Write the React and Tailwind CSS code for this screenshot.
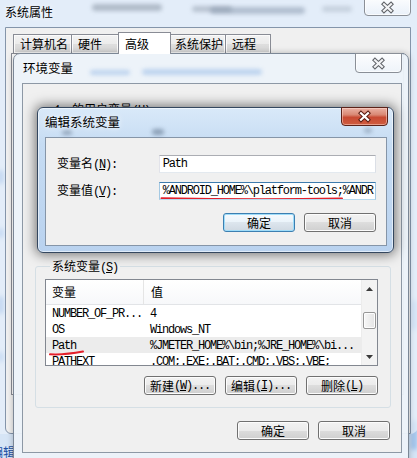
import React from 'react'

const MONO = "font-['Liberation_Mono',monospace] tracking-[-1.2px]"

function M({ children, className = '' }) {
  return <span className={`${MONO} ${className}`}>{children}</span>
}

function XGlyph({ active = false }) {
  return (
    <svg width="13" height="11" viewBox="0 0 13 11" className="overflow-visible">
      <path d="M3 2.2 L10 8.8 M10 2.2 L3 8.8" stroke={active ? '#5a1c12' : '#5e6166'} strokeWidth="4.2" strokeLinecap="square" fill="none" />
      <path d="M3 2.2 L10 8.8 M10 2.2 L3 8.8" stroke={active ? '#ffffff' : '#f2f3f5'} strokeWidth="2.2" strokeLinecap="square" fill="none" />
    </svg>
  )
}

function CloseBtn({ active = false, className = '' }) {
  return (
    <div
      className={`absolute flex items-center justify-center rounded-b-[4px] border ${
        active
          ? 'border-[#5b2219] bg-[linear-gradient(#eab1a4,#d98874_40%,#c84a33_55%,#cf5d40)] shadow-[inset_0_0_0_1px_rgba(255,220,210,0.5)]'
          : 'border-[#8a8f97] bg-[linear-gradient(rgba(255,255,255,0.85),rgba(240,244,250,0.5))] shadow-[inset_0_0_0_1px_rgba(255,255,255,0.7)]'
      } ${className}`}
    >
      <XGlyph active={active} />
    </div>
  )
}

function Btn({ children, def = false, className = '' }) {
  return (
    <div
      className={`flex h-[19px] w-[72px] items-center justify-center rounded-[3px] border ${
        def
          ? 'border-[#3c7fb1] bg-[linear-gradient(#f6fafd,#eaf3fa_50%,#dde6ee_50%,#cfd9e2)] shadow-[inset_0_0_0_1px_#9fdcf9]'
          : 'border-[#707070] bg-[linear-gradient(#f2f2f2,#ebebeb_50%,#dddddd_50%,#cfcfcf)] shadow-[inset_0_0_0_1px_#fcfcfc]'
      } ${className}`}
    >
      {children}
    </div>
  )
}

function Blur({ className }) {
  return <div className={`pointer-events-none absolute rounded-full blur-[2px] ${className}`} />
}

const tabs = [
  { label: '计算机名', w: 'w-[59px]' },
  { label: '硬件', w: 'w-[48px]' },
  { label: '高级', w: 'w-[53px]', active: true },
  { label: '系统保护', w: 'w-[58px]' },
  { label: '远程', w: 'w-[46px]' },
]

const rows = [
  { name: 'NUMBER_OF_PR...', value: '4' },
  { name: 'OS', value: 'Windows_NT' },
  { name: 'Path', value: '%JMETER_HOME%\\bin;%JRE_HOME%\\bi...', selected: true },
  { name: 'PATHEXT', value: '.COM;.EXE;.BAT;.CMD;.VBS;.VBE;' },
]

export default function App() {
  return (
    <div className="relative h-[458px] w-[417px] overflow-hidden bg-[#d6e5f6] font-['Noto_Sans_CJK_SC','Noto_Sans',sans-serif] text-[12px] leading-none text-black">
      {/* desktop glass blur */}
      <Blur className="left-[-3px] top-[170px] h-[14px] w-[7px] bg-[#6f9fdc]" />
      <Blur className="left-[-3px] top-[228px] h-[10px] w-[7px] bg-[#7aa8e2]" />
      <Blur className="left-[-3px] top-[296px] h-[18px] w-[7px] bg-[#6f9fdc]" />
      <Blur className="left-[-3px] top-[352px] h-[10px] w-[7px] bg-[#86b0e5]" />
      <Blur className="left-[411px] top-[300px] h-[30px] w-[6px] bg-[#9cbfe9]" />
      <Blur className="left-[411px] top-[420px] h-[30px] w-[6px] bg-[#9cbfe9]" />
      <span className="absolute left-[-9px] top-[446px] text-[#1d4fa3]">编辑</span>

      {/* 系统属性 */}
      <div className="absolute left-[-8px] top-[-8px] flex h-[442px] w-[426px] flex-col rounded-[8px] bg-[rgba(232,240,249,0.72)]">
        <div className="relative flex h-[35px] shrink-0 items-start">
          <Blur className="left-[100px] top-[12px] h-[7px] w-[70px] bg-[#8d99a8] opacity-60" />
          <Blur className="left-[200px] top-[14px] h-[6px] w-[40px] bg-[#8d99a8] opacity-50" />
          <Blur className="left-[218px] top-[15px] h-[7px] w-[95px] bg-[#7f90a6] opacity-50" />
          <Blur className="left-[330px] top-[14px] h-[6px] w-[30px] bg-[#9aa7b6] opacity-40" />
          <span className="relative ml-[13px] mt-[14px] [text-shadow:0_0_6px_#fff]">系统属性</span>
          <CloseBtn className="left-[372px] top-[6px] h-[18px] w-[47px]" />
        </div>
        <div className="ml-[13px] mr-[7px] flex flex-1 flex-col rounded-bl-[6px] border border-[#8495aa] bg-[#f0f0f0]">
          <div className="mt-[6px] flex h-[19px] items-end pl-[8px]">
            {tabs.map((t) => (
              <div
                key={t.label}
                className={`-ml-px flex items-center border border-b-0 border-[#898c95] pl-[6px] ${t.w} ${
                  t.active
                    ? 'relative z-10 -mx-[2px] -mb-px h-[22px] bg-white'
                    : 'h-[19px] bg-[linear-gradient(#f3f3f3,#ebebeb_50%,#dedede_50%,#d6d6d6)] shadow-[inset_0_0_0_1px_#fbfbfb]'
                }`}
              >
                {t.label}
              </div>
            ))}
          </div>
          <div className="ml-[5px] h-[342px] w-[393px] border border-[#898c95] bg-white" />
        </div>
      </div>

      {/* 环境变量 */}
      <div className="absolute left-[13px] top-[53px] flex h-[420px] w-[396px] flex-col rounded-t-[7px] border border-[#7b8796] bg-[rgba(236,242,249,0.96)] shadow-[0_0_6px_rgba(0,0,0,0.25)]">
        <div className="relative flex h-[29px] shrink-0 items-start">
          <Blur className="left-[76px] top-[16px] h-[5px] w-[40px] bg-[#a9c6ea] opacity-70" />
          <Blur className="left-[128px] top-[15px] h-[6px] w-[120px] bg-[#a9c6ea] opacity-70" />
          <span className="relative ml-[9px] mt-[8px] text-[12.5px] [text-shadow:0_0_6px_#fff]">环境变量</span>
          <CloseBtn className="left-[341px] top-[-1px] h-[20px] w-[47px]" />
        </div>
        <div className="ml-[8px] flex h-[370px] w-[380px] flex-col border border-[#8d98a5] bg-[#f0f0f0]">
          <div className="ml-[31px] mt-[19px] h-[14px]">
            <M>1: </M>的用户变量<M>(<span className="underline">U</span>)</M>
          </div>

          <fieldset className="ml-[12px] mr-[10px] mt-auto rounded-[3px] border border-[#d5dfe5] pb-[12px] pl-[9px] pr-[12px] pt-[6px]">
            <legend className="ml-[5px] h-[14px] px-[2px] leading-[14px]">
              系统变量<M>(<span className="underline">S</span>)</M>
            </legend>
            <div className="flex h-[87px] overflow-hidden border border-[#828790] bg-white">
              <div className="flex min-w-0 flex-1 flex-col">
                <div className="flex h-[25px] shrink-0 border-b border-[#e2e4e7] bg-[linear-gradient(#ffffff,#f7f8fa)]">
                  <div className="flex w-[98px] items-center border-r border-[#e5e5e5] pl-[6px]">变量</div>
                  <div className="flex flex-1 items-center pl-[7px]">值</div>
                </div>
                {rows.map((r) => (
                  <div
                    key={r.name}
                    className={`relative flex h-[16px] shrink-0 items-center ${r.selected ? 'bg-[#ececec]' : ''}`}
                  >
                    <div className="w-[98px] shrink-0 pl-[6px]">
                      <M>{r.name}</M>
                    </div>
                    <div className="whitespace-nowrap pl-[6px]">
                      <M>{r.value}</M>
                    </div>
                    {r.selected && (
                      <svg className="absolute left-[3px] top-[13px]" width="36" height="6" viewBox="0 0 36 6">
                        <path d="M1 4.3 Q 16 5 34 1.6" stroke="#e3202a" strokeWidth="2" fill="none" strokeLinecap="round" />
                      </svg>
                    )}
                  </div>
                ))}
              </div>
              <div className="flex w-[16px] shrink-0 flex-col border-l border-[#ececec] bg-[#f3f3f3]">
                <div className="flex h-[17px] items-center justify-center">
                  <svg width="7" height="4" viewBox="0 0 7 4"><path d="M0 4 L3.5 0 L7 4 Z" fill="#3a3a3a" /></svg>
                </div>
                <div className="mx-[1px] mt-[15px] h-[17px] rounded-[2px] border border-[#979797] bg-[linear-gradient(90deg,#f7f7f7,#e4e4e4)] shadow-[inset_0_0_0_1px_#fdfdfd]" />
                <div className="flex-1" />
                <div className="flex h-[17px] items-center justify-center">
                  <svg width="7" height="4" viewBox="0 0 7 4"><path d="M0 0 L7 0 L3.5 4 Z" fill="#3a3a3a" /></svg>
                </div>
              </div>
            </div>
            <div className="mt-[10px] flex justify-end gap-[9px]">
              <Btn>新建<M>(<span className="underline">W</span>)...</M></Btn>
              <Btn>编辑<M>(<span className="underline">I</span>)...</M></Btn>
              <Btn>删除<M>(<span className="underline">L</span>)</M></Btn>
            </div>
          </fieldset>

          <div className="mb-[12px] mt-[13px] flex justify-end gap-[9px] pr-[11px]">
            <Btn>确定</Btn>
            <Btn>取消</Btn>
          </div>
        </div>
      </div>

      {/* 编辑系统变量 */}
      <div className="absolute left-[37px] top-[107px] flex h-[146px] w-[357px] flex-col rounded-[6px] border border-[#34475f] bg-[linear-gradient(#d9e9f9,#c6dcf3_25%,#b9d2ef)] shadow-[0_0_12px_2px_rgba(0,0,0,0.5),inset_0_0_0_1px_rgba(255,255,255,0.55)]">
        <div className="relative flex h-[29px] shrink-0 items-start">
          <Blur className="left-[24px] top-[22px] h-[5px] w-[10px] bg-[#6d7f96] opacity-60" />
          <Blur className="left-[114px] top-[21px] h-[6px] w-[12px] bg-[#5f738c] opacity-60" />
          <Blur className="left-[326px] top-[20px] h-[5px] w-[8px] bg-[#6d7f96] opacity-50" />
          <span className="relative ml-[7px] mt-[8px] text-[12.5px] [text-shadow:0_0_6px_#fff]">编辑系统变量</span>
          <CloseBtn active className="left-[303px] top-[-1px] h-[19px] w-[47px]" />
        </div>
        <div className="ml-[7px] flex h-[109px] w-[342px] flex-col border border-[#8595a8] bg-[#f0f0f0] pl-[11px] pr-[10px] pt-[17px]">
          <div className="flex h-[18px] items-center">
            <div className="w-[102px]">
              变量名<M>(<span className="underline">N</span>):</M>
            </div>
            <div className="flex h-[18px] w-[218px] items-center border border-[#abadb3] border-b-[#e3e9ef] border-l-[#e2e3ea] border-r-[#dbdfe6] bg-white pl-[3px]">
              <M>Path</M>
            </div>
          </div>
          <div className="mt-[9px] flex h-[18px] items-center">
            <div className="w-[102px]">
              变量值<M>(<span className="underline">V</span>):</M>
            </div>
            <div className="relative flex h-[18px] w-[218px] items-center overflow-hidden whitespace-nowrap border border-[#3d7bad] border-b-[#b7d9ed] border-l-[#a4c9e3] border-r-[#a4c9e3] bg-white pl-[3px]">
              <M>%ANDROID_HOME%\platform-tools;%ANDR</M>
              <svg className="absolute left-[0px] top-[13px]" width="186" height="5" viewBox="0 0 186 5">
                <path d="M1.5 2.2 Q 90 4 182 2.6" stroke="#e3202a" strokeWidth="2" fill="none" strokeLinecap="round" />
              </svg>
            </div>
          </div>
          <div className="mt-[13px] flex justify-end gap-[9px]">
            <Btn def>确定</Btn>
            <Btn>取消</Btn>
          </div>
        </div>
      </div>
    </div>
  )
}
